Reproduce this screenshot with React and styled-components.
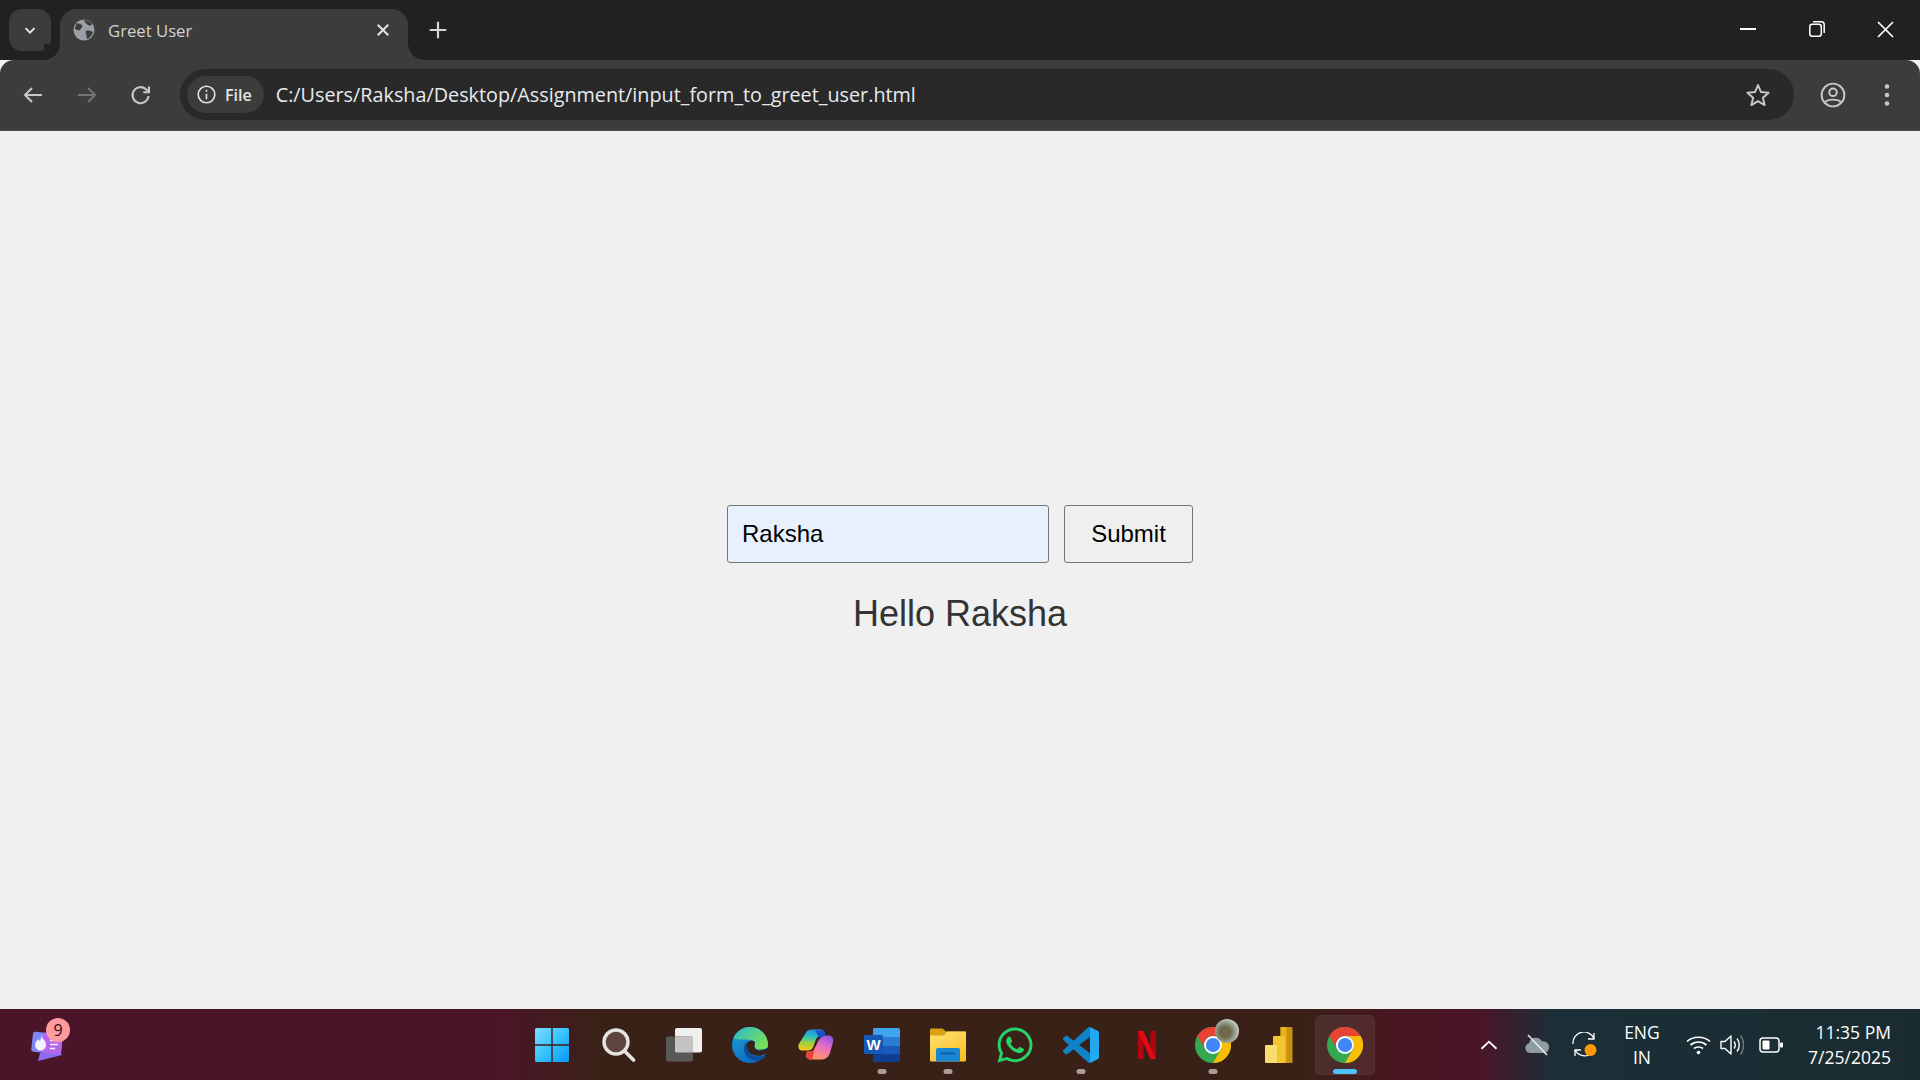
import { useId } from "react";
import styled, { createGlobalStyle } from "styled-components";
import { FaWhatsapp } from "react-icons/fa";

const GlobalStyle = createGlobalStyle`
  html, body {
    margin: 0;
    padding: 0;
    background: #f0f0f0;
  }
  * {
    box-sizing: border-box;
  }
`;

const Screen = styled.div`
  display: flex;
  flex-direction: column;
  width: 1920px;
  height: 1080px;
  overflow: hidden;
  font-family: "Open Sans", "Noto Sans", sans-serif;
`;

// browser chrome
const TabStrip = styled.div`
  display: flex;
  align-items: flex-end;
  height: 60px;
  flex-shrink: 0;
  padding-left: 9px;
  background: #202221;
`;
const TabSearch = styled.div`
  display: flex;
  align-items: center;
  justify-content: center;
  width: 42px;
  height: 42px;
  margin-bottom: 9px;
  border-radius: 13px;
  background: #3c3c3c;
`;
const Tab = styled.div`
  position: relative;
  display: flex;
  align-items: center;
  width: 348px;
  height: 51px;
  margin-left: 9px;
  padding: 0 16px 9px 13px;
  border-radius: 16px 16px 0 0;
  background: #3c3c3c;

  &::before,
  &::after {
    content: "";
    position: absolute;
    bottom: 0;
    width: 16px;
    height: 16px;
  }
  &::before {
    left: -16px;
    background: radial-gradient(circle at 0 0, #202221 15.5px, #3c3c3c 16px);
  }
  &::after {
    right: -16px;
    background: radial-gradient(circle at 100% 0, #202221 15.5px, #3c3c3c 16px);
  }
`;
const TabTitle = styled.span`
  flex: 1;
  margin-left: 13px;
  font-size: 16.7px;
  color: #d2d2d2;
`;
const NewTab = styled.div`
  display: flex;
  align-items: center;
  justify-content: center;
  width: 30px;
  height: 30px;
  margin: 0 0 15px 15px;
`;
const WindowControls = styled.div`
  display: flex;
  align-self: stretch;
  margin-left: auto;
`;
const WindowButton = styled.div`
  display: flex;
  align-items: center;
  justify-content: center;
  width: 69px;
  height: 58px;
`;
const Toolbar = styled.div`
  display: flex;
  align-items: center;
  height: 71px;
  flex-shrink: 0;
  padding: 0 0 1px 6px;
  border-radius: 14px 14px 0 0;
  border-bottom: 1px solid #4c4c4c;
  background: #3c3c3c;
`;
const NavButton = styled.div`
  display: flex;
  flex-shrink: 0;
  align-items: center;
  justify-content: center;
  width: 54px;
  height: 42px;
`;
const Omnibox = styled.div`
  display: flex;
  flex-shrink: 0;
  align-items: center;
  width: 1614px;
  height: 51px;
  margin-left: 12px;
  padding: 0 23px 0 7px;
  border-radius: 26px;
  background: #292929;
`;
const SecurityChip = styled.div`
  display: flex;
  align-items: center;
  gap: 8px;
  height: 37px;
  padding: 0 12px 0 9px;
  border-radius: 19px;
  background: #3c3c3c;
  color: #e6e6e6;
  font-size: 16px;
  font-weight: 600;
`;
const Url = styled.span`
  flex: 1;
  margin-left: 12px;
  font-size: 19.8px;
  color: #e8eaed;
`;
const ToolbarEnd = styled.div`
  display: flex;
  align-items: center;
  margin-left: 12px;
`;

// page content
const Main = styled.main`
  flex: 1;
  display: flex;
  flex-direction: column;
  align-items: center;
  justify-content: center;
  padding-bottom: 2px;
  background: #f0f0f0;
  font-family: "Liberation Sans", Arial, sans-serif;
`;
const Form = styled.form`
  display: flex;
  gap: 15px;
`;
const NameInput = styled.input`
  width: 322px;
  height: 58px;
  padding: 0 14px;
  border: 1px solid #767676;
  border-radius: 3px;
  outline: none;
  background: #e8f0fe;
  color: #000;
  font-family: inherit;
  font-size: 24px;
`;
const SubmitButton = styled.button`
  width: 129px;
  height: 58px;
  padding: 0;
  border: 1px solid #767676;
  border-radius: 3px;
  background: #efefef;
  color: #000;
  font-family: inherit;
  font-size: 24px;
`;
const Greeting = styled.h2`
  margin: 30px 0 0;
  font-size: 36px;
  font-weight: 400;
  line-height: 41px;
  color: #333;
`;

// taskbar
const Taskbar = styled.footer`
  display: flex;
  align-items: center;
  height: 71px;
  flex-shrink: 0;
  background: linear-gradient(
    90deg,
    #4a1529 0%,
    #4b1526 26%,
    #3a2118 31%,
    #3a2118 68%,
    #47171f 72%,
    #4a1528 77%,
    #1b2f38 81%,
    #1a2c30 100%
  );
`;
const WidgetArea = styled.div`
  position: relative;
  display: flex;
  flex-shrink: 0;
  align-items: center;
  width: 522px;
  height: 100%;
  padding-left: 29px;
`;
const Badge = styled.span`
  position: absolute;
  left: 46px;
  top: 9px;
  display: flex;
  align-items: center;
  justify-content: center;
  width: 24px;
  height: 24px;
  border-radius: 50%;
  background: #ff9a9e;
  color: #2a1015;
  font-size: 16px;
`;
const TaskIcons = styled.div`
  display: flex;
  flex-shrink: 0;
  gap: 6.08px;
`;
const TaskSlot = styled.div`
  position: relative;
  display: flex;
  align-items: center;
  justify-content: center;
  width: 60px;
  height: 60px;
  border-radius: 6px;
  background: ${(props) => (props.$active ? "rgba(255,255,255,0.07)" : "transparent")};
  box-shadow: ${(props) => (props.$active ? "inset 0 0 0 1px rgba(255,255,255,0.04)" : "none")};
`;
const RunDot = styled.span`
  position: absolute;
  left: 50%;
  bottom: 1px;
  width: ${(props) => (props.$active ? "24px" : "9px")};
  height: 5px;
  border-radius: 3px;
  transform: translateX(-50%);
  background: ${(props) => (props.$active ? "#4cc2ff" : "#a89e98")};
`;
const Tray = styled.div`
  display: flex;
  flex-shrink: 0;
  align-items: center;
  margin-left: 90px;
  color: #fff;
`;
const TrayIcon = styled.div`
  display: flex;
  align-items: center;
  justify-content: center;
  width: ${(props) => props.$w}px;
`;
const Lang = styled.div`
  width: 66px;
  margin-right: 7px;
  font-size: 17.5px;
  line-height: 25px;
  text-align: center;
`;
const Clock = styled.div`
  width: 99px;
  font-size: 17.5px;
  line-height: 25px;
  text-align: right;
  white-space: nowrap;
`;
const ProfileBlob = styled.span`
  position: absolute;
  top: 4px;
  right: 4px;
  width: 24px;
  height: 24px;
  border-radius: 50%;
  background: radial-gradient(circle at 42% 55%, #6f6a4e 0 28%, #9aa596 55%, #d8d8d8 76%, #44584a 100%);
`;

const ChromeIcon = ({ size = 36 }) => (
  <svg width={size} height={size} viewBox="0 0 48 48">
    <circle cx="24" cy="24" r="24" fill="#34a853" />
    <path d="M3.2 12A24 24 0 0 1 44.8 12H24A12 12 0 0 0 13.6 30Z" fill="#ea4335" />
    <path d="M44.8 12A24 24 0 0 1 24 48L34.4 30A12 12 0 0 0 24 12Z" fill="#fbbc04" />
    <circle cx="24" cy="24" r="12" fill="#fff" />
    <circle cx="24" cy="24" r="9.5" fill="#4285f4" />
  </svg>
);

const WindowsIcon = () => {
  const id = useId();
  return (
    <svg width="36" height="36" viewBox="0 0 36 36">
      <defs>
        <linearGradient id={id} x1="0" y1="0" x2="1" y2="1">
          <stop offset="0" stopColor="#7fdcff" />
          <stop offset="0.5" stopColor="#36c3ff" />
          <stop offset="1" stopColor="#0a97f5" />
        </linearGradient>
      </defs>
      <path d="M1 2.5A1.5 1.5 0 0 1 2.5 1H17.3V17.3H1ZM18.7 1H33.5A1.5 1.5 0 0 1 35 2.5V17.3H18.7ZM1 18.7H17.3V35H2.5A1.5 1.5 0 0 1 1 33.5ZM18.7 18.7H35V33.5A1.5 1.5 0 0 1 33.5 35H18.7Z" fill={`url(#${id})`} />
    </svg>
  );
};

const SearchIcon = () => (
  <svg width="36" height="36" viewBox="0 0 36 36" fill="none">
    <circle cx="16" cy="15" r="12" fill="#5e463f" stroke="#e6e4e3" strokeWidth="3.400" />
    <path d="M25 24.5 33.500 33" stroke="#e6e4e3" strokeWidth="3.600" strokeLinecap="round" />
  </svg>
);

const TaskViewIcon = () => (
  <svg width="38" height="36" viewBox="0 0 38 36">
    <rect x="10" y="1" width="27" height="24.5" rx="2" fill="#efefef" />
    <rect x="1" y="9.5" width="27" height="25" rx="2" fill="#5a5856" />
    <rect x="10" y="9.5" width="18" height="16" rx="1" fill="#c4c3c2" />
  </svg>
);

const EdgeIcon = () => {
  const id = useId();
  const top = useId();
  return (
    <svg width="36" height="36" viewBox="0 0 36 36">
      <defs>
        <linearGradient id={id} x1="0" y1="0" x2="0.5" y2="1">
          <stop offset="0" stopColor="#1fa4dc" />
          <stop offset="1" stopColor="#0b6cc0" />
        </linearGradient>
        <linearGradient id={top} x1="0" y1="0" x2="1" y2="0.6">
          <stop offset="0" stopColor="#2bb7d0" />
          <stop offset="1" stopColor="#76e05a" />
        </linearGradient>
      </defs>
      <circle cx="18" cy="18" r="18" fill={`url(#${id})`} />
      <path d="M1.500 11C5 3 12 0 18 0C28 0 36 8 36 18C36 20 35.500 20.500 34 21.500C30 23 25 23 23 21C21 18 25 15 21 13.500C14 11 5 14 1.500 11Z" fill={`url(#${top})`} />
      <path d="M37 20C32 24 25 25 23 21C21 18 25 15 21 14C15 13 13 18 15 22C17 27 24 31 33 27L37 27Z" fill="#3a2118" />
      <path d="M14 16C10 20 12 28 18 32C23 35 29 34 33 30C33.500 29 33 28 32 28.500C26 31 20 29 17 25C15 22 14 19 14 16Z" fill="#0b4f9c" />
    </svg>
  );
};

const CopilotIcon = () => {
  const left = useId();
  const right = useId();
  return (
    <svg width="36" height="32" viewBox="0 0 36 31">
      <defs>
        <linearGradient id={left} x1="0.5" y1="0" x2="0.4" y2="1">
          <stop offset="0" stopColor="#1e90ea" />
          <stop offset="0.35" stopColor="#29c3c0" />
          <stop offset="0.65" stopColor="#9fd23c" />
          <stop offset="1" stopColor="#f5c61f" />
        </linearGradient>
        <linearGradient id={right} x1="0.8" y1="0" x2="0.3" y2="1">
          <stop offset="0" stopColor="#8c55e6" />
          <stop offset="0.45" stopColor="#ec6fc0" />
          <stop offset="1" stopColor="#ff9a5a" />
        </linearGradient>
      </defs>
      <path d="M8 3C9 1 11 0 14 0H22C25 0 27 2 27 5L21 7C19 8 18 9 17.500 11L15 18C14 20 12 21 10 21H4C1 21 0 18 .5 15Z" fill={`url(#${left})`} />
      <path d="M17 1H22C25 0 27 2 27 6L21 8C19 6 19 3 17 1Z" fill="#1b4fd0" />
      <path d="M23 8C24 7 26 6 28 6H31C34 6 36 9 35 13L32 23C31 27 28 30 24 30H13C10 30 8 28 8 25L9 22H13C15 22 16 20 17 18L20 12C21 10 22 9 23 8Z" fill={`url(#${right})`} />
      <path d="M9 22H13C15 22 16 20 17 18L15 26C14 28 15 30 17 30H13C10 30 8 28 8 25Z" fill="#e8453c" />
    </svg>
  );
};

const WordIcon = () => (
  <svg width="36" height="36" viewBox="0 0 36 36">
    <path d="M9 2A1.5 1.5 0 0 1 10.5 1H34A2 2 0 0 1 36 3V10H9Z" fill="#41a5ee" />
    <rect x="9" y="10" width="27" height="9" fill="#2b7cd3" />
    <rect x="9" y="19" width="27" height="8" fill="#185abd" />
    <path d="M9 27H36V33A2 2 0 0 1 34 35H10.5A1.5 1.5 0 0 1 9 33.5Z" fill="#103f91" />
    <rect x="0" y="8" width="19" height="19" rx="1.5" fill="#1558b8" />
    <text x="9.5" y="23" textAnchor="middle" fontFamily="'Liberation Sans', sans-serif" fontSize="15" fontWeight="700" fill="#fff">W</text>
  </svg>
);

const ExplorerIcon = () => (
  <svg width="36" height="36" viewBox="0 0 36 36">
    <defs>
      <linearGradient id="folderFill" x1="0" y1="0" x2="0.6" y2="1">
        <stop offset="0" stopColor="#ffe27a" />
        <stop offset="1" stopColor="#fdc023" />
      </linearGradient>
    </defs>
    <path d="M0 3A1.5 1.5 0 0 1 1.5 1.5H12.5L16 4.5H36V12H0Z" fill="#d9a010" />
    <path d="M0 8.5L14 8.5L17 4.5H35A1 1 0 0 1 36 5.500V33A1.5 1.5 0 0 1 34.500 34.500H1.500A1.500 1.500 0 0 1 0 33Z" fill="url(#folderFill)" />
    <path d="M6 23A2 2 0 0 1 8 21H28A2 2 0 0 1 30 23V34.500H6Z" fill="#1a85d4" />
    <rect x="10.500" y="25.500" width="15" height="2" rx="1" fill="#0f5fa8" />
  </svg>
);

const VscodeIcon = () => (
  <svg width="36" height="36" viewBox="0 0 24 24">
    <path d="M23.15 2.587L18.21.21a1.494 1.494 0 0 0-1.705.29l-9.46 8.63-4.12-3.128a.999.999 0 0 0-1.276.057L.327 7.261A1 1 0 0 0 .326 8.74L3.899 12 .326 15.26a1 1 0 0 0 .001 1.479L1.65 17.94a.999.999 0 0 0 1.276.057l4.12-3.128 9.46 8.63a1.492 1.492 0 0 0 1.704.29l4.942-2.377A1.5 1.5 0 0 0 24 20.06V3.939a1.5 1.5 0 0 0-.85-1.352zm-5.146 14.861L10.826 12l7.178-5.448v10.896z" fill="#0f82c8" />
    <path d="M18 .1 18.210.21l4.940 2.377A1.500 1.500 0 0 1 24 3.939V20.060a1.500 1.500 0 0 1-.850 1.352L18.210 23.790 18 23.870Z" fill="#23a9f2" />
  </svg>
);

const NetflixIcon = () => (
  <svg width="18" height="28" viewBox="0 0 18 28">
    <path d="M0 0H5.500V28L0 28.500Z" fill="#b1060f" />
    <path d="M12.500 0H18V28.500L12.500 28Z" fill="#b1060f" />
    <path d="M0 0H5.500L18 28.500L12.500 28Z" fill="#e50914" />
  </svg>
);

const PowerBiIcon = () => (
  <svg width="28" height="36" viewBox="0 0 28 36">
    <rect x="15.500" y="0" width="12" height="36" rx="1" fill="#c8920e" />
    <rect x="15.500" y="0" width="6" height="36" fill="#eab01d" />
    <rect x="8" y="9" width="12" height="27" rx="1" fill="#f2c530" />
    <rect x="0" y="18" width="12" height="18" rx="1" fill="#f8dc6c" />
  </svg>
);

const WidgetsIcon = () => (
  <svg width="36" height="32" viewBox="0 0 36 32">
    <path d="M11 24 30 19 33 26 9 32Z" fill="#8b6cf0" />
    <path d="M8 6 24 2 26 10 10 14Z" fill="#49b6c9" />
    <g transform="rotate(6 18 14)">
      <rect x="3" y="4" width="30" height="20" rx="2.500" fill="#7f86f5" />
      <path d="M14 4H30.500A2.500 2.500 0 0 1 33 6.500V21.500A2.500 2.500 0 0 1 30.500 24H14Z" fill="#b467ee" />
    </g>
    <path d="M12 6C13 10 17 11 17 16A5.500 5.500 0 0 1 6 16C6 13 8 12 9 10C10 11 10.500 12 11 12C12 10 12.500 8 12 6Z" fill="#f5f2ff" />
    <path d="M21 11.500H29M21 15.500H29M21 19.500H26" stroke="#f5f2ff" strokeWidth="1.500" />
  </svg>
);

const GlobeIcon = () => (
  <svg width="22" height="22" viewBox="0 0 22 22">
    <circle cx="11" cy="11" r="10.500" fill="#9aa0a6" />
    <path d="M4 4C6 5 8 5 9 6C10 8 8 9 7 11C6 12 4 11 2 10C2 8 3 6 4 4Z" fill="#3c3c3c" />
    <path d="M11 1C14 1 17 2 19 5C18 7 16 7 15 6C13 5 12 3 11 1Z" fill="#3c3c3c" />
    <path d="M13 12C15 11 18 12 20 13C19 16 17 19 14 20C13 18 14 16 13 15C12.500 14 12.500 13 13 12Z" fill="#3c3c3c" />
  </svg>
);

const Stroke = ({ size = 24, color = "#c7c7c7", width = 2, children }) => (
  <svg width={size} height={size} viewBox="0 0 24 24" fill="none" stroke={color} strokeWidth={width}>
    {children}
  </svg>
);

const taskIcons = [
  { key: "start", icon: <WindowsIcon /> },
  { key: "search", icon: <SearchIcon /> },
  { key: "taskview", icon: <TaskViewIcon /> },
  { key: "edge", icon: <EdgeIcon /> },
  { key: "copilot", icon: <CopilotIcon /> },
  { key: "word", icon: <WordIcon />, running: true },
  { key: "explorer", icon: <ExplorerIcon />, running: true },
  { key: "whatsapp", icon: <FaWhatsapp size={40} color="#25d366" /> },
  { key: "vscode", icon: <VscodeIcon />, running: true },
  { key: "netflix", icon: <NetflixIcon /> },
  { key: "chrome2", icon: <ChromeIcon />, running: true, profile: true },
  { key: "powerbi", icon: <PowerBiIcon /> },
  { key: "chrome", icon: <ChromeIcon />, active: true },
];

function App() {
  return (
    <Screen>
      <GlobalStyle />
      <TabStrip>
        <TabSearch>
          <Stroke size={18} color="#e3e3e3" width={2.8}>
            <path d="M6 9.500 12 15.500 18 9.500" />
          </Stroke>
        </TabSearch>
        <Tab>
          <GlobeIcon />
          <TabTitle>Greet User</TabTitle>
          <Stroke size={18} color="#e6e6e6" width={2.6}>
            <path d="M5 5 19 19M19 5 5 19" />
          </Stroke>
        </Tab>
        <NewTab>
          <Stroke size={22} color="#d6d6d6" width={2.4}>
            <path d="M12 3V21M3 12H21" />
          </Stroke>
        </NewTab>
        <WindowControls>
          <WindowButton>
            <svg width="16" height="2" viewBox="0 0 16 2"><rect width="16" height="2" fill="#fff" /></svg>
          </WindowButton>
          <WindowButton>
            <svg width="16" height="16" viewBox="0 0 16 16" fill="none" stroke="#fff" strokeWidth="1.500">
              <rect x="0.800" y="3.200" width="11.500" height="12" rx="2.500" />
              <path d="M4 .8H12.500A2.800 2.800 0 0 1 15.200 3.600V12" />
            </svg>
          </WindowButton>
          <WindowButton>
            <svg width="17" height="17" viewBox="0 0 17 17" stroke="#fff" strokeWidth="1.700">
              <path d="M1 1 16 16M16 1 1 16" />
            </svg>
          </WindowButton>
        </WindowControls>
      </TabStrip>
      <Toolbar>
        <NavButton>
          <Stroke size={24} color="#c7c7c7" width={2.100}>
            <path d="M21 12H4M11 5 4 12 11 19" />
          </Stroke>
        </NavButton>
        <NavButton>
          <Stroke size={24} color="#757575" width={2.100}>
            <path d="M3 12H20M13 5 20 12 13 19" />
          </Stroke>
        </NavButton>
        <NavButton>
          <Stroke size={24} color="#c7c7c7" width={2.100}>
            <path d="M19.500 13A8 8 0 1 1 17 6.300L20 9" />
            <path d="M20 3.500V9.200H14.300" />
          </Stroke>
        </NavButton>
        <Omnibox>
          <SecurityChip>
            <Stroke size={21} color="#e3e3e3" width={1.800}>
              <circle cx="12" cy="12" r="9.500" />
              <path d="M12 11V17.500M12 6.500V8.800" />
            </Stroke>
            File
          </SecurityChip>
          <Url>C:/Users/Raksha/Desktop/Assignment/input_form_to_greet_user.html</Url>
          <Stroke size={26} color="#c7c7c7" width={1.800}>
            <path d="M12 2.800 14.800 9.300 21.800 9.900 16.500 14.500 18.100 21.300 12 17.700 5.900 21.300 7.500 14.500 2.200 9.900 9.200 9.300Z" strokeLinejoin="round" />
          </Stroke>
        </Omnibox>
        <ToolbarEnd>
          <NavButton>
            <Stroke size={26} color="#c7c7c7" width={1.800}>
              <circle cx="12" cy="12" r="10.500" />
              <circle cx="12" cy="9.500" r="3.500" />
              <path d="M5 18.500C7 15.500 17 15.500 19 18.500" />
            </Stroke>
          </NavButton>
          <NavButton>
            <svg width="6" height="24" viewBox="0 0 6 24" fill="#c7c7c7">
              <circle cx="3" cy="3.500" r="2.300" />
              <circle cx="3" cy="12" r="2.300" />
              <circle cx="3" cy="20.500" r="2.300" />
            </svg>
          </NavButton>
        </ToolbarEnd>
      </Toolbar>
      <Main>
        <Form onSubmit={(e) => e.preventDefault()}>
          <NameInput defaultValue="Raksha" />
          <SubmitButton type="submit">Submit</SubmitButton>
        </Form>
        <Greeting>Hello Raksha</Greeting>
      </Main>
      <Taskbar>
        <WidgetArea>
          <WidgetsIcon />
          <Badge>9</Badge>
        </WidgetArea>
        <TaskIcons>
          {taskIcons.map((item) => (
            <TaskSlot key={item.key} $active={item.active}>
              {item.icon}
              {item.profile && <ProfileBlob />}
              {(item.running || item.active) && <RunDot $active={item.active} />}
            </TaskSlot>
          ))}
        </TaskIcons>
        <Tray>
          <TrayIcon $w={48}>
            <Stroke size={20} color="#fff" width={2.200}>
              <path d="M3 16.500 12 8 21 16.500" />
            </Stroke>
          </TrayIcon>
          <TrayIcon $w={48}>
            <svg width="26" height="22" viewBox="0 0 26 22">
              <path d="M6 19A5 5 0 0 1 5 9.200 7 7 0 0 1 18 7.500 5.800 5.800 0 0 1 20.500 19Z" fill="#8f9ca3" />
              <path d="M4 1 23 21" stroke="#e8ecee" strokeWidth="1.600" />
            </svg>
          </TrayIcon>
          <TrayIcon $w={48}>
            <svg width="26" height="26" viewBox="0 0 26 26" fill="none" stroke="#fff" strokeWidth="1.300">
              <path d="M1 12A11 11 0 0 1 22 6.500M22 1V7H16" />
              <path d="M17 23A11 11 0 0 1 3 18M3 24V18H9" />
              <circle cx="18.500" cy="18" r="6" fill="#ff9800" stroke="none" />
            </svg>
          </TrayIcon>
          <Lang>
            ENG
            <br />
            IN
          </Lang>
          <TrayIcon $w={34}>
            <svg width="25" height="20" viewBox="0 0 25 20" fill="none" stroke="#fff" strokeWidth="1.700">
              <path d="M1 6.500C7 .8 18 .8 24 6.500M4.500 10C9 6 16 6 20.500 10M8 13.500C10.500 11.500 14.500 11.500 17 13.500" />
              <circle cx="12.500" cy="17.500" r="1.800" fill="#fff" stroke="none" />
            </svg>
          </TrayIcon>
          <TrayIcon $w={34}>
            <svg width="25" height="22" viewBox="0 0 25 22" fill="none" stroke="#fff" strokeWidth="1.400">
              <path d="M1 7.500H5L11 2V20L5 14.500H1Z" strokeLinejoin="round" />
              <path d="M14 7.500C15.500 9.500 15.500 12.500 14 14.500M17 4.500C20 8 20 14 17 17.500" />
              <path d="M20.500 1.500C24.500 7 24.500 15 20.500 20.500" stroke="#6b7a7d" />
            </svg>
          </TrayIcon>
          <TrayIcon $w={42}>
            <svg width="24" height="16" viewBox="0 0 24 16" fill="none">
              <rect x="1" y="1" width="19" height="14" rx="3" stroke="#fff" strokeWidth="1.500" />
              <rect x="3.500" y="3.500" width="7" height="9" rx="1" fill="#fff" />
              <rect x="21" y="5.500" width="3" height="5" rx="1" fill="#fff" />
            </svg>
          </TrayIcon>
          <Clock>
            11:35 PM
            <br />
            7/25/2025
          </Clock>
        </Tray>
      </Taskbar>
    </Screen>
  );
}

export default App;
